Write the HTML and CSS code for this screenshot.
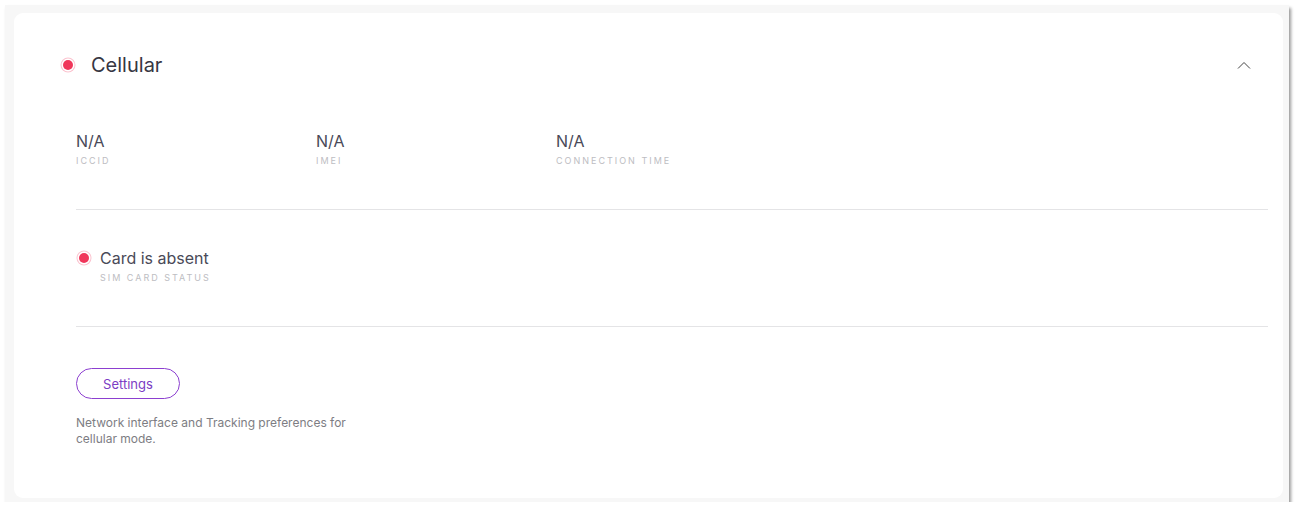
FILE: index.html
```html
<!DOCTYPE html>
<html>
<head>
<meta charset="utf-8">
<link rel="stylesheet" href="styles.css">
</head>
<body>
<div class="frame">
  <div class="card">
    <div class="header">
      <span class="dot dot-lg"></span>
      <span class="title">Cellular</span>
      <svg class="chevron" width="14" height="8" viewBox="0 0 14 8"><path d="M1 7.5 L7 1.5 L13 7.5" fill="none" stroke="#444" stroke-width="1"/></svg>
    </div>
    <div class="section info">
      <div class="field">
        <div class="value">N/A</div>
        <div class="label">ICCID</div>
      </div>
      <div class="field">
        <div class="value">N/A</div>
        <div class="label">IMEI</div>
      </div>
      <div class="field">
        <div class="value">N/A</div>
        <div class="label">Connection time</div>
      </div>
    </div>
    <div class="divider"></div>
    <div class="section sim">
      <span class="dot dot-sm"></span>
      <div class="field">
        <div class="value">Card is absent</div>
        <div class="label">SIM card status</div>
      </div>
    </div>
    <div class="divider"></div>
    <div class="section settings">
      <button class="btn">Settings</button>
      <p class="desc">Network interface and Tracking preferences for cellular mode.</p>
    </div>
  </div>
</div>
</body>
</html>
```
FILE: styles.css
```css
html, body {
  margin: 0;
  padding: 0;
  background: #ffffff;
}
body {
  font-family: Inter, "Noto Sans", sans-serif;
  padding: 5px 0 0 5px;
}
.frame {
  width: 1284px;
  height: 497px;
  box-sizing: border-box;
  background: #f7f7f7;
  padding: 8px 6px 4px 9px;
  box-shadow: 2px 3px 3px rgba(0,0,0,0.4);
}
.card {
  background: #ffffff;
  border-radius: 9px;
  height: 485px;
  box-sizing: border-box;
  padding: 0 15px 0 62px;
}
.header {
  display: flex;
  align-items: center;
  height: 24px;
  padding: 40px 0 54px;
  margin-left: -15px;
  margin-right: 17px;
}
.dot {
  display: inline-block;
  border-radius: 50%;
  background: #f0365a;
  box-shadow: 0 0 0 1.5px #fff, 0 0 0 2.5px #fbc3cf;
  flex: none;
}
.dot-lg {
  width: 10px;
  height: 10px;
  margin-left: 2px;
}
.title {
  font-size: 20px;
  color: #363642;
  margin-left: 18px;
  flex: 1;
}
.chevron {
  flex: none;
}
.info {
  display: flex;
}
.info .field {
  width: 240px;
}
.value {
  font-size: 16px;
  line-height: 20px;
  color: #4a4a58;
}
.label {
  font-size: 9px;
  line-height: 12px;
  margin-top: 4px;
  color: #bdbdc2;
  text-transform: uppercase;
  letter-spacing: 2px;
}
.divider {
  height: 1px;
  background: #e4e4e6;
  margin-top: 42px;
}
.sim {
  display: flex;
  align-items: flex-start;
  padding-top: 38px;
}
.dot-sm {
  width: 10px;
  height: 10px;
  margin: 5px 0 0 3px;
}
.sim .field {
  margin-left: 11px;
}
.settings {
  padding-top: 41px;
}
.btn {
  display: block;
  width: 104px;
  height: 31px;
  box-sizing: border-box;
  border: 1px solid #8c3fd0;
  border-radius: 16px;
  background: #fff;
  color: #7b3cc4;
  font-family: Inter, "Noto Sans", sans-serif;
  font-size: 13px;
  padding: 0;
}
.desc {
  margin: 16px 0 0;
  font-size: 12px;
  line-height: 16px;
  color: #7d7d83;
  width: 290px;
}
```
